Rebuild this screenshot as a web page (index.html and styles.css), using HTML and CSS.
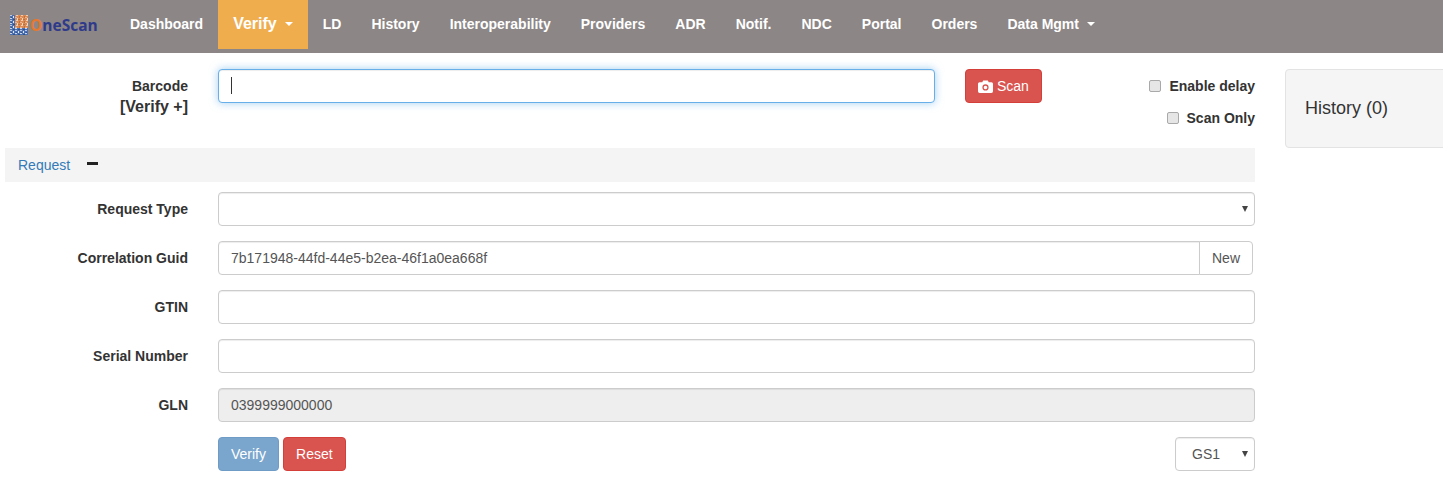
FILE: index.html
```html
<!DOCTYPE html>
<html lang="en">
<head>
<meta charset="utf-8">
<title>OneScan</title>
<link rel="stylesheet" href="styles.css">
</head>
<body>
<nav class="navbar">
  <a class="brand" href="#">
    <svg class="brand-mark" width="18" height="20" viewBox="0 0 18 20" aria-hidden="true">
      <defs>
        <pattern id="speck-blue" width="5" height="5" patternUnits="userSpaceOnUse">
          <rect width="5" height="5" fill="#4d70b0"/>
          <rect x="0" y="0" width="2" height="1" fill="#b9c7e2"/>
          <rect x="3" y="1" width="1" height="2" fill="#dfe6f3"/>
          <rect x="1" y="2" width="1" height="1" fill="#2f558f"/>
          <rect x="0" y="3" width="2" height="1" fill="#c9d4ea"/>
          <rect x="3" y="4" width="2" height="1" fill="#2f558f"/>
        </pattern>
        <pattern id="speck-orange" width="5" height="5" patternUnits="userSpaceOnUse">
          <rect width="5" height="5" fill="#d98a55"/>
          <rect x="1" y="0" width="2" height="1" fill="#f0cdb0"/>
          <rect x="4" y="1" width="1" height="2" fill="#c46f36"/>
          <rect x="0" y="2" width="2" height="1" fill="#e9b48e"/>
          <rect x="2" y="3" width="1" height="2" fill="#f3d8c0"/>
          <rect x="3" y="4" width="2" height="1" fill="#c46f36"/>
        </pattern>
      </defs>
      <rect width="18" height="20" fill="url(#speck-blue)"/>
      <rect x="5" width="13" height="13" fill="url(#speck-orange)"/>
    </svg>
    <span class="brand-text"><span class="brand-o">O</span>neScan</span>
  </a>
  <ul class="nav">
    <li><a href="#">Dashboard</a></li>
    <li class="active"><a href="#">Verify<span class="caret"></span></a></li>
    <li><a href="#">LD</a></li>
    <li><a href="#">History</a></li>
    <li><a href="#">Interoperability</a></li>
    <li><a href="#">Providers</a></li>
    <li><a href="#">ADR</a></li>
    <li><a href="#">Notif.</a></li>
    <li><a href="#">NDC</a></li>
    <li><a href="#">Portal</a></li>
    <li><a href="#">Orders</a></li>
    <li><a href="#">Data Mgmt<span class="caret"></span></a></li>
  </ul>
</nav>

<div class="page">
  <main class="main">
    <div class="row barcode-row">
      <div class="barcode-label">
        <label class="label" for="barcode">Barcode</label>
        <div class="mode">[Verify +]</div>
      </div>
      <div class="barcode-controls">
        <div class="focus-wrap">
          <input id="barcode" class="control focused" type="text">
          <span class="text-caret"></span>
        </div>
        <button class="btn btn-danger scan" type="button">
          <svg width="15" height="13" viewBox="0 0 14 12" aria-hidden="true">
            <path fill="#fff" fill-rule="evenodd" d="M1.5 2H4l.8-1.600h4.400L10 2h2.500A1.500 1.500 0 0 1 14 3.500v7A1.500 1.500 0 0 1 12.500 12h-11A1.500 1.500 0 0 1 0 10.500v-7A1.500 1.500 0 0 1 1.500 2zM7 9.800a2.900 2.900 0 1 0 0-5.800 2.900 2.900 0 0 0 0 5.800zM7 8.600a1.700 1.700 0 1 1 0-3.400 1.700 1.700 0 0 1 0 3.400z"/>
          </svg>
          Scan
        </button>
        <div class="checks">
          <label class="check"><input type="checkbox">Enable delay</label>
          <label class="check"><input type="checkbox">Scan Only</label>
        </div>
      </div>
    </div>

    <div class="section-bar">
      <a href="#">Request</a>
      <span class="minus"></span>
    </div>

    <div class="row">
      <label class="label" for="rtype">Request Type</label>
      <div class="select-wrap">
        <select id="rtype" class="control"><option></option></select>
      </div>
    </div>
    <div class="row">
      <label class="label" for="guid">Correlation Guid</label>
      <div class="input-group">
        <input id="guid" class="control" type="text" value="7b171948-44fd-44e5-b2ea-46f1a0ea668f">
        <button class="addon" type="button">New</button>
      </div>
    </div>
    <div class="row">
      <label class="label" for="gtin">GTIN</label>
      <input id="gtin" class="control" type="text">
    </div>
    <div class="row">
      <label class="label" for="serial">Serial Number</label>
      <input id="serial" class="control" type="text">
    </div>
    <div class="row">
      <label class="label" for="gln">GLN</label>
      <input id="gln" class="control" type="text" value="0399999000000" disabled>
    </div>
    <div class="row">
      <span></span>
      <div class="actions">
        <div class="action-buttons">
          <button class="btn btn-verify" type="button">Verify</button>
          <button class="btn btn-danger" type="button">Reset</button>
        </div>
        <div class="select-wrap gs1">
          <select class="control" aria-label="Format"><option>GS1</option></select>
        </div>
      </div>
    </div>
  </main>
  <aside class="history">History (0)</aside>
</div>
</body>
</html>
```
FILE: styles.css
```css
* { box-sizing: border-box; }
html, body { margin: 0; overflow: hidden; }
body {
  font-family: "Liberation Sans", Arial, sans-serif;
  font-size: 14px;
  line-height: 20px;
  color: #333;
  background: #fff;
}
a { text-decoration: none; }

.navbar {
  display: flex;
  align-items: flex-start;
  height: 53px;
  background: #8c8686;
}
.brand {
  display: flex;
  align-items: center;
  width: 115px;
  height: 49px;
  padding-left: 10px;
}
.brand-mark { flex: none; }
.brand-text {
  margin-left: 2px;
  font-family: "Open Sans", sans-serif;
  font-weight: 700;
  font-size: 15.5px;
  color: #2f3a8a;
}
.brand-o { color: #e6792f; }
.nav {
  display: flex;
  margin: 0;
  padding: 0;
  list-style: none;
}
.nav a {
  display: flex;
  align-items: center;
  height: 49px;
  padding: 0 15px 2px;
  color: #fff;
  font-weight: 700;
}
.nav .active a { background: #f0ad4e; font-size: 16px; }
.caret {
  width: 0;
  height: 0;
  margin-left: 8px;
  border-top: 4px solid #fff;
  border-left: 4px solid transparent;
  border-right: 4px solid transparent;
}

.page {
  display: flex;
  gap: 30px;
  padding: 16px 0 0 5px;
  margin-right: -6px;
}
.main { flex: none; width: 1250px; }
.history {
  flex: 1;
  height: 79px;
  padding: 28px 19px 0;
  font-size: 18px;
  background: #f5f5f5;
  border: 1px solid #e3e3e3;
  border-radius: 4px;
}

.row {
  display: grid;
  grid-template-columns: 183px 1fr;
  column-gap: 30px;
  align-items: center;
  margin-bottom: 15px;
}
.label {
  display: block;
  text-align: right;
  font-weight: 700;
}
.barcode-row { align-items: start; margin-bottom: 0; height: 79px; }
.barcode-label { padding-top: 7px; text-align: right; }
.mode { font-size: 16px; font-weight: 700; line-height: 20px; margin-top: 1px; }
.barcode-controls { display: flex; align-items: flex-start; }
.focus-wrap { position: relative; flex: none; width: 717px; }
.text-caret {
  position: absolute;
  left: 13px;
  top: 8px;
  width: 1px;
  height: 17px;
  background: #333;
}
.control {
  display: block;
  width: 100%;
  height: 34px;
  padding: 6px 12px;
  font: inherit;
  color: #555;
  background: #fff;
  border: 1px solid #ccc;
  border-radius: 4px;
  box-shadow: inset 0 1px 1px rgba(0, 0, 0, .075);
  outline: none;
}
.control:disabled { background: #eee; opacity: 1; }
.focused {
  border-color: #66afe9;
  box-shadow: inset 0 1px 1px rgba(0, 0, 0, .075), 0 0 8px rgba(102, 175, 233, .6);
}
.btn {
  height: 34px;
  padding: 6px 12px;
  font: inherit;
  color: #fff;
  border: 1px solid transparent;
  border-radius: 4px;
}
.btn-danger { background: #d9534f; border-color: #d43f3a; }
.btn-verify { background: #7aa5cd; border-color: #6f9cc6; }
.scan { flex: none; margin-left: 30px; width: 77px; padding: 6px 0; }
.scan svg { vertical-align: -2px; }
.checks {
  display: flex;
  flex-direction: column;
  align-items: flex-end;
  gap: 12px;
  margin-left: auto;
  padding-top: 7px;
}
.check {
  display: flex;
  align-items: center;
  font-weight: 700;
}
.check input {
  appearance: none;
  width: 12px;
  height: 12px;
  margin: 0 8px 0 0;
  background: #e6e6e6;
  border: 1px solid #a9a9a9;
  border-radius: 2px;
}

.section-bar {
  display: flex;
  align-items: center;
  height: 34px;
  margin-bottom: 10px;
  padding-left: 13px;
  background: #f4f4f4;
}
.section-bar a { color: #337ab7; }
.minus {
  width: 11px;
  height: 3px;
  margin: 0 0 3px 17px;
  background: #222;
}

.select-wrap { position: relative; }
.select-wrap::after {
  content: "";
  position: absolute;
  right: 7px;
  top: 14px;
  border-top: 6px solid #444;
  border-left: 3.5px solid transparent;
  border-right: 3.5px solid transparent;
  pointer-events: none;
}
.select-wrap select { appearance: none; }
.input-group { display: flex; width: 1035px; }
.input-group .control {
  flex: 1;
  border-radius: 4px 0 0 4px;
}
.addon {
  flex: none;
  width: 54px;
  margin-left: -1px;
  font: inherit;
  color: #555;
  background: #fff;
  border: 1px solid #ccc;
  border-radius: 0 4px 4px 0;
}
.actions {
  display: flex;
  justify-content: space-between;
}
.action-buttons { display: flex; gap: 4px; }
.gs1 { width: 80px; }
.gs1 select { padding-left: 16px; }
```
